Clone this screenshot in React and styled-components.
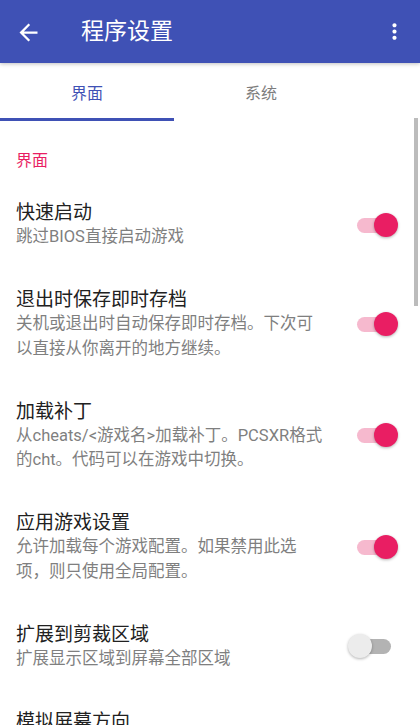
import React from 'react';
import styled, { createGlobalStyle } from 'styled-components';

const GlobalStyle = createGlobalStyle`
  *, *:before, *:after {
    box-sizing: border-box;
  }

  body {
    margin: 0;
    background: #fff;
    font-family: Roboto, "Noto Sans CJK SC", "Noto Sans", sans-serif;
  }
`;

const Screen = styled.div`
  width: 420px;
  height: 725px;
  overflow: hidden;
  position: relative;
  background: #fff;
`;

const AppBar = styled.header`
  position: relative;
  z-index: 2;
  height: 63px;
  display: flex;
  align-items: center;
  padding: 0 0 0 15px;
  background: #3f51b5;
  box-shadow: 0 1px 4px rgba(0, 0, 0, 0.25);
  color: #fff;
`;

const IconButton = styled.button`
  display: flex;
  align-items: center;
  justify-content: center;
  padding: 0;
  border: 0;
  background: none;
  color: inherit;
  margin-top: ${p => p.offset || 0}px;
`;

const Title = styled.h1`
  flex: 1;
  margin: 0 0 0 39px;
  font-size: 23px;
  font-weight: 400;
  line-height: 30px;
`;

const MenuButton = styled(IconButton)`
  margin-right: 13px;
`;

const TabBar = styled.nav`
  height: 58px;
  display: flex;
  background: #fff;
`;

const Tab = styled.div`
  width: 174px;
  display: flex;
  align-items: center;
  justify-content: center;
  padding-top: 2px;
  font-size: 16px;
  color: ${p => (p.active ? '#3f51b5' : '#7d7d7d')};
  border-bottom: 3px solid ${p => (p.active ? '#3f51b5' : 'transparent')};
`;

const Content = styled.main`
  position: relative;
`;

const ScrollThumb = styled.div`
  position: absolute;
  top: -3px;
  right: 2px;
  width: 4px;
  height: 188px;
  background: #bcbcbc;
`;

const SectionHeader = styled.div`
  padding: 29px 16px 10px;
  font-size: 16px;
  line-height: 22px;
  color: #e91e63;
`;

const PrefRow = styled.div`
  display: flex;
  align-items: center;
  padding: 19.25px 22px 19.25px 16px;
`;

const TextCol = styled.div`
  flex: 1;
  margin-right: 74px;
`;

const PrefTitle = styled.div`
  font-size: 19px;
  line-height: 24px;
  color: #212121;
`;

const Summary = styled.div`
  font-size: 16.5px;
  line-height: 24.5px;
  color: #7f7f7f;
`;

const SwitchBox = styled.div`
  position: relative;
  width: 50px;
  height: 24px;
  flex-shrink: 0;
  margin: -2px 0 0 -50px;
`;

const Track = styled.div`
  position: absolute;
  left: 9px;
  top: 5px;
  width: 34px;
  height: 15px;
  border-radius: 8px;
  background: ${p => (p.on ? '#f6b9ce' : '#b3b3b3')};
`;

const Thumb = styled.div`
  position: absolute;
  top: 0;
  left: ${p => (p.on ? 26 : 0)}px;
  width: 24px;
  height: 24px;
  border-radius: 50%;
  background: ${p => (p.on ? '#e91e63' : '#ececec')};
  box-shadow: 0 1px 3px rgba(0, 0, 0, 0.3);
`;

const Switch = ({ on }) => (
  <SwitchBox>
    <Track on={on ? 1 : 0} />
    <Thumb on={on ? 1 : 0} />
  </SwitchBox>
);

const BackIcon = () => (
  <svg width="27" height="27" viewBox="0 0 24 24" fill="#fff">
    <path d="M20 11H7.83l5.59-5.59L12 4l-8 8 8 8 1.41-1.41L7.83 13H20v-2z" />
  </svg>
);

const MoreIcon = () => (
  <svg width="25" height="25" viewBox="0 0 24 24" fill="#fff">
    <path d="M12 8c1.1 0 2-.9 2-2s-.9-2-2-2-2 .9-2 2 .9 2 2 2zm0 2c-1.1 0-2 .9-2 2s.9 2 2 2 2-.9 2-2-.9-2-2-2zm0 6c-1.1 0-2 .9-2 2s.9 2 2 2 2-.9 2-2-.9-2-2-2z" />
  </svg>
);

const prefs = [
  { title: '快速启动', summary: '跳过BIOS直接启动游戏', toggle: true, on: true },
  { title: '退出时保存即时存档', summary: '关机或退出时自动保存即时存档。下次可以直接从你离开的地方继续。', toggle: true, on: true },
  { title: '加载补丁', summary: '从cheats/<游戏名>加载补丁。PCSXR格式的cht。代码可以在游戏中切换。', toggle: true, on: true },
  { title: '应用游戏设置', summary: '允许加载每个游戏配置。如果禁用此选项，则只使用全局配置。', toggle: true, on: true },
  { title: '扩展到剪裁区域', summary: '扩展显示区域到屏幕全部区域', toggle: true, on: false },
  { title: '模拟屏幕方向', summary: '自动', toggle: false },
];

export default function App() {
  return (
    <Screen>
      <GlobalStyle />
      <AppBar>
        <IconButton offset={1}>
          <BackIcon />
        </IconButton>
        <Title>程序设置</Title>
        <MenuButton>
          <MoreIcon />
        </MenuButton>
      </AppBar>
      <TabBar>
        <Tab active>界面</Tab>
        <Tab>系统</Tab>
      </TabBar>
      <Content>
        <ScrollThumb />
        <SectionHeader>界面</SectionHeader>
        {prefs.map(p => (
          <PrefRow key={p.title}>
            <TextCol>
              <PrefTitle>{p.title}</PrefTitle>
              <Summary>{p.summary}</Summary>
            </TextCol>
            {p.toggle && <Switch on={p.on} />}
          </PrefRow>
        ))}
      </Content>
    </Screen>
  );
}
